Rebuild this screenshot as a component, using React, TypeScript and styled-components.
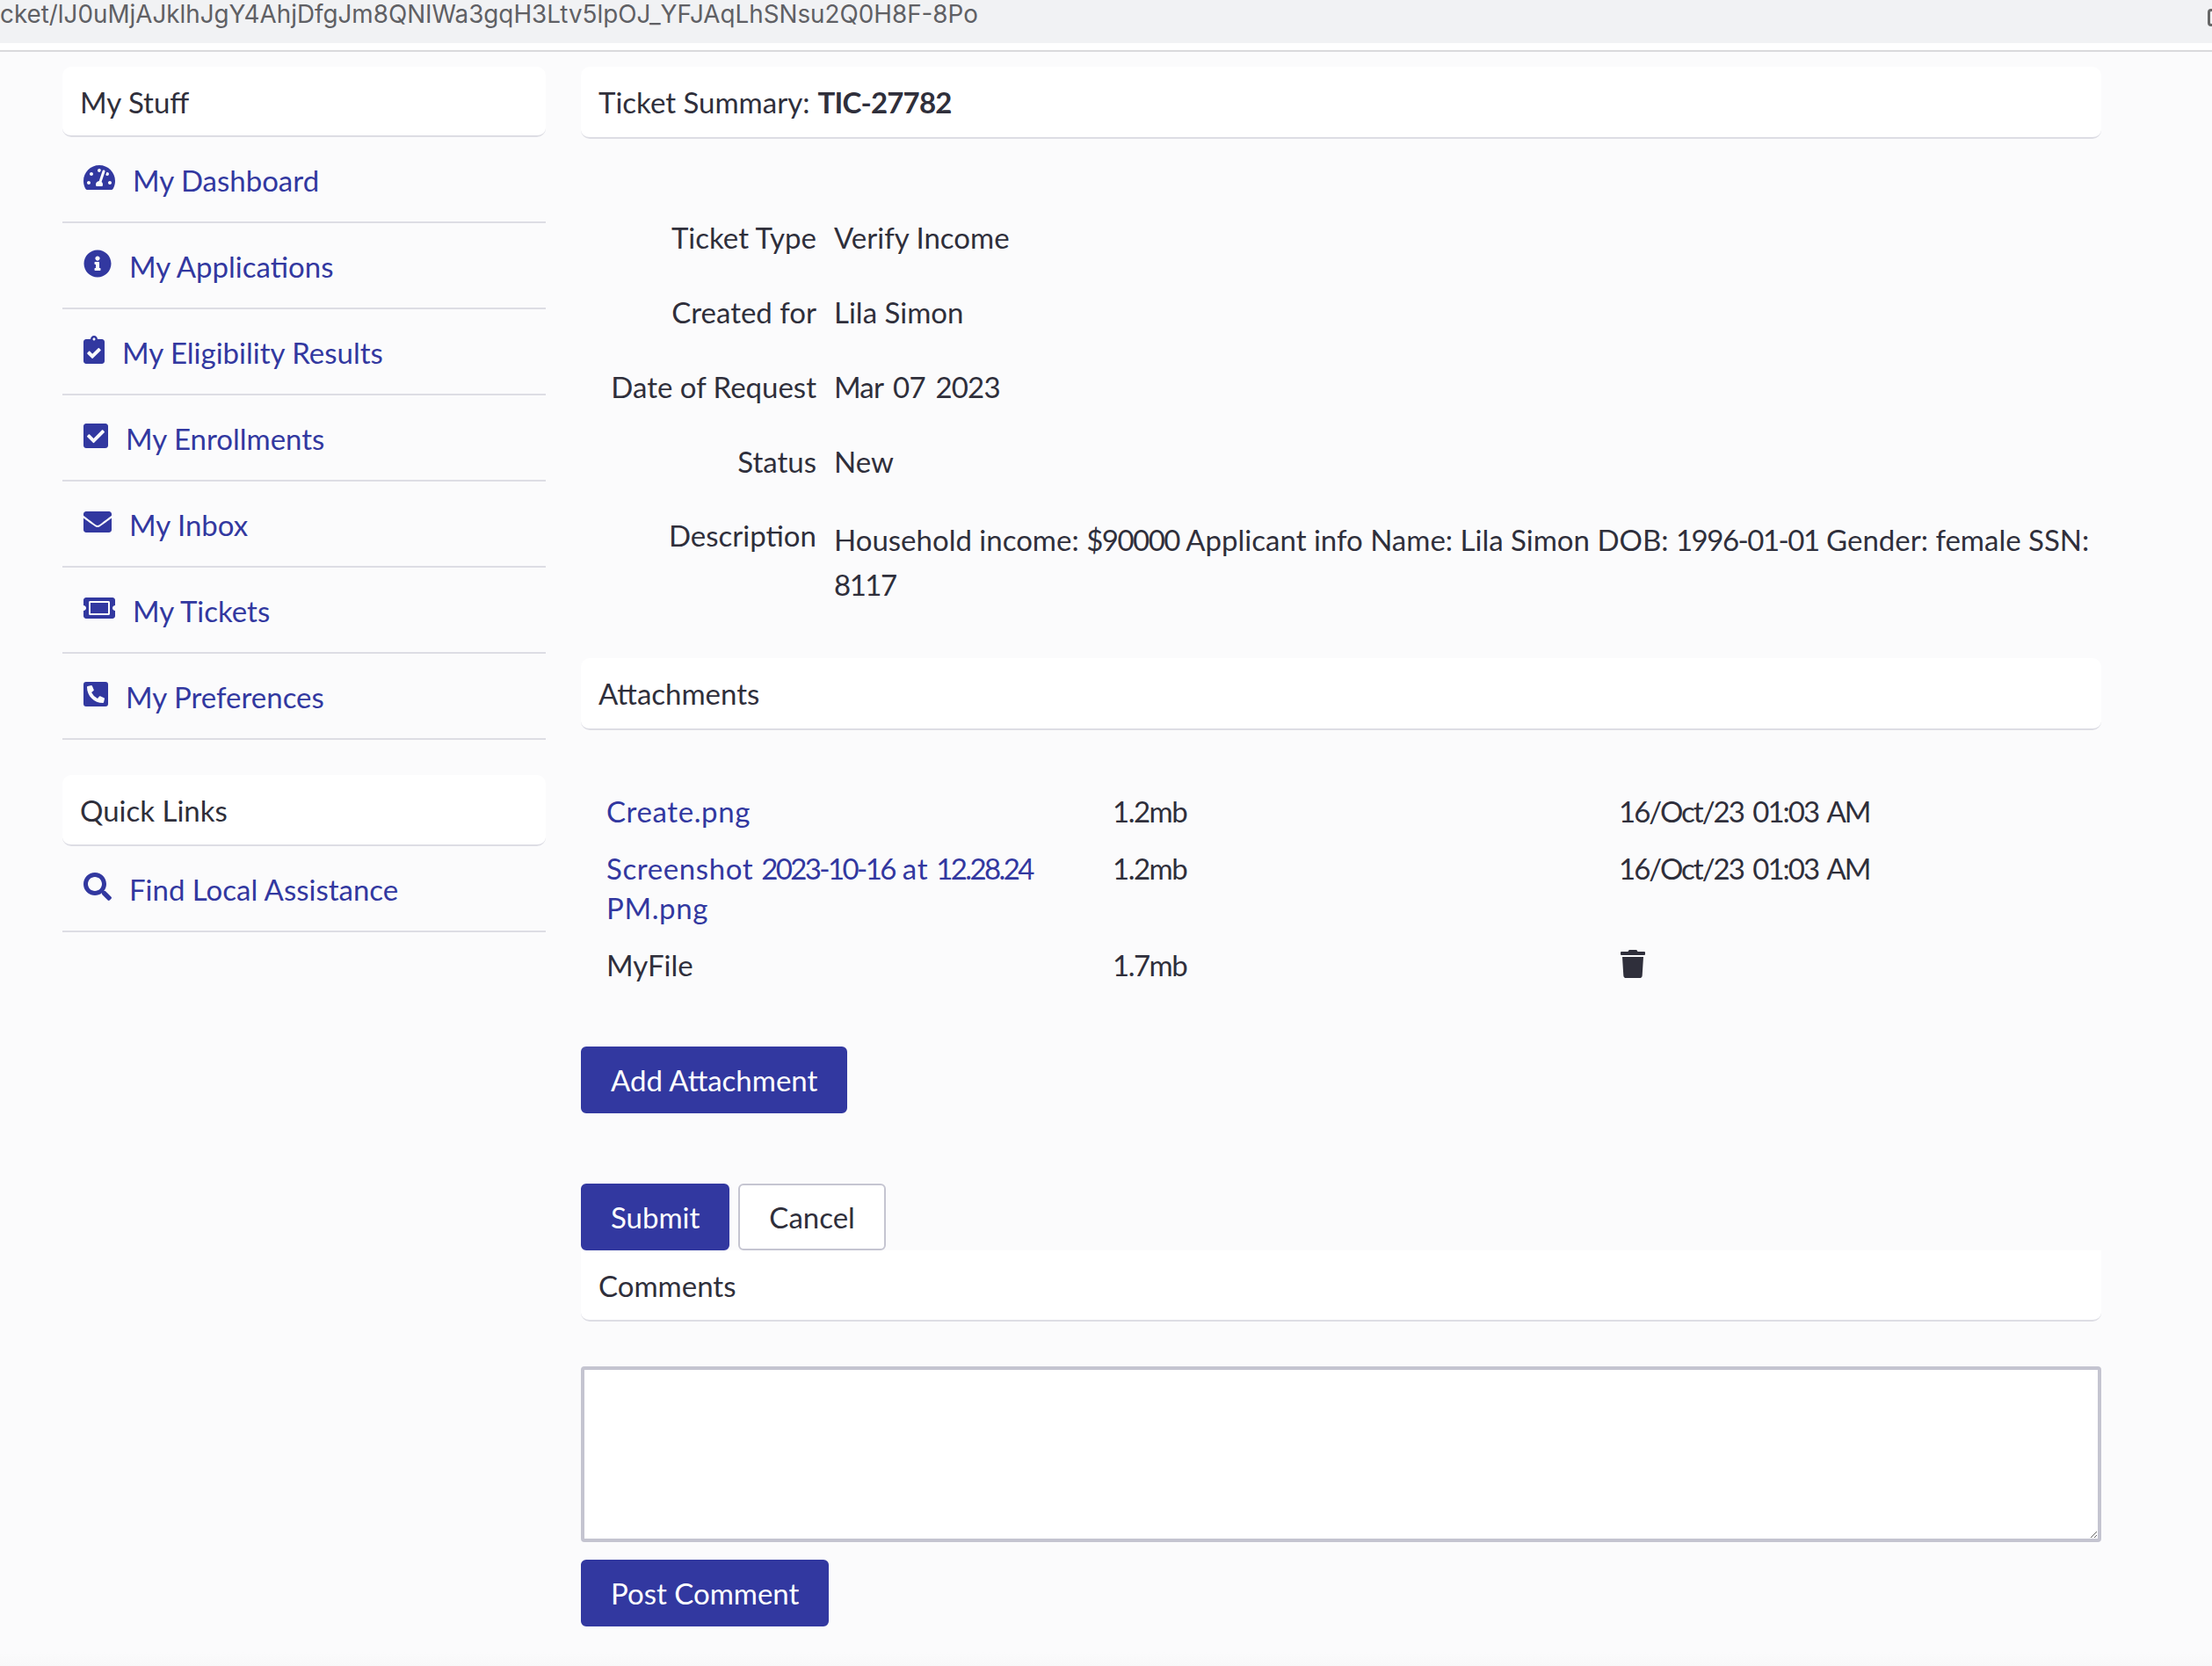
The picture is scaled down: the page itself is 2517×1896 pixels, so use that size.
import React from "react";
import styled, { createGlobalStyle } from "styled-components";
import {
  FaTachometerAlt,
  FaInfoCircle,
  FaClipboardCheck,
  FaCheckSquare,
  FaEnvelope,
  FaTicketAlt,
  FaPhoneSquareAlt,
  FaSearch,
  FaTrash,
} from "react-icons/fa";

const Global = createGlobalStyle`
  html, body { margin: 0; padding: 0; background: #fbfbfc; }
  * { box-sizing: border-box; }
  body { font-family: Lato, "Open Sans", sans-serif; font-size: 33px; color: #2f2f3b; }
`;

const Page = styled.div`
  width: 2517px;
  height: 1896px;
  overflow: hidden;
  background: linear-gradient(#fbfbfc calc(100% - 16px), #f8f8f9);
`;
const UrlBar = styled.div`
  height: 49px;
  background: #f1f2f4;
  display: flex;
  justify-content: space-between;
  overflow: hidden;
`;
const UrlText = styled.div`
  font-family: Inter, sans-serif;
  font-size: 27.8px;
  line-height: 32px;
  color: #5f6064;
  white-space: nowrap;
`;
const UrlIcon = styled.div`
  width: 20px;
  height: 20px;
  margin: 10px -15px 0 0;
  border: 3px solid #666;
  border-radius: 4px;
`;
const Gap = styled.div`
  height: 8px;
  background: #fff;
`;
const Rule = styled.div`
  height: 2px;
  background: #d9d9dc;
`;
const Layout = styled.div`
  display: flex;
  gap: 40px;
  padding: 17px 0 0 71px;
`;
const Sidebar = styled.aside`
  width: 550px;
  flex: none;
`;
const Main = styled.main`
  width: 1730px;
  flex: none;
`;
const CardHead = styled.div<{ $h: number; $pt?: number; $square?: boolean }>`
  height: ${(p) => p.$h}px;
  padding: ${(p) => p.$pt ?? 0}px 20px 0;
  display: flex;
  align-items: center;
  gap: 9px;
  background: #fff;
  border-bottom: 2px solid #dddde4;
  border-radius: ${(p) => (p.$square ? "0 0 10px 10px" : "10px")};
`;
const NavList = styled.nav<{ $mb?: number }>`
  margin-bottom: ${(p) => p.$mb ?? 0}px;
`;
const NavRow = styled.a<{ $iconWidth: number }>`
  height: 98px;
  padding: 2px 0 0 24px;
  display: flex;
  align-items: center;
  gap: 20px;
  color: #3238a0;
  border-bottom: 2px solid #dddde4;
  text-decoration: none;
  svg {
    flex: none;
    width: ${(p) => p.$iconWidth}px;
    height: 32px;
    margin-top: -6px;
  }
`;
const Details = styled.dl`
  margin: 70px 0 0;
  display: grid;
  grid-template-columns: 268px 1fr;
  column-gap: 20px;
`;
const Label = styled.dt<{ $wide?: boolean }>`
  text-align: right;
  line-height: ${(p) => (p.$wide ? "51px" : "85px")};
  padding-top: ${(p) => (p.$wide ? "16px" : "0")};
`;
const Value = styled.dd<{ $wide?: boolean }>`
  margin: 0;
  line-height: ${(p) => (p.$wide ? "51px" : "85px")};
  padding-top: ${(p) => (p.$wide ? "21px" : "0")};
`;
const Num = styled.span<{ $ls?: number }>`
  letter-spacing: ${(p) => p.$ls ?? -1.5}px;
  word-spacing: 4px;
`;
const Section = styled.div<{ $mt: number }>`
  margin-top: ${(p) => p.$mt}px;
`;
const Table = styled.div`
  margin-top: 70px;
  padding-left: 29px;
  display: grid;
  grid-template-columns: 576px 576px 1fr;
  row-gap: 20px;
  line-height: 45px;
`;
const FileLink = styled.a`
  color: #3238a0;
  text-decoration: none;
  padding-right: 40px;
  letter-spacing: 0.6px;
`;
const TrashIcon = styled(FaTrash)`
  width: 28px;
  height: 32px;
  display: block;
  margin: 5px 0 0 2px;
`;
const Button = styled.button<{ $ghost?: boolean; $pad?: number }>`
  height: 76px;
  padding: 0 ${(p) => p.$pad ?? 32}px;
  font: inherit;
  line-height: 1;
  border-radius: 6px;
  border: 2px solid ${(p) => (p.$ghost ? "#c5c5d1" : "#3238a0")};
  background: ${(p) => (p.$ghost ? "#fff" : "#3238a0")};
  color: ${(p) => (p.$ghost ? "#2f2f3b" : "#fff")};
`;
const Actions = styled.div<{ $mt: number }>`
  margin-top: ${(p) => p.$mt}px;
  display: flex;
  gap: 10px;
`;
const Comment = styled.textarea`
  display: block;
  width: 100%;
  height: 200px;
  margin: 51px 0 20px;
  background: #fff;
  border: 4px solid #c4c4d0;
  border-radius: 4px;
  resize: vertical;
  outline: none;
`;
const Strong = styled.strong`
  font-weight: 700;
  letter-spacing: -0.8px;
`;

const navItems = [
  { icon: <FaTachometerAlt />, w: 36, label: "My Dashboard" },
  { icon: <FaInfoCircle />, w: 32, label: "My Applications" },
  { icon: <FaClipboardCheck />, w: 24, label: "My Eligibility Results" },
  { icon: <FaCheckSquare />, w: 28, label: "My Enrollments" },
  { icon: <FaEnvelope />, w: 32, label: "My Inbox" },
  { icon: <FaTicketAlt />, w: 36, label: "My Tickets" },
  { icon: <FaPhoneSquareAlt />, w: 28, label: "My Preferences" },
];

const details: [string, React.ReactNode][] = [
  ["Ticket Type", "Verify Income"],
  ["Created for", "Lila Simon"],
  ["Date of Request", <Num $ls={-0.8}>Mar 07 2023</Num>],
  ["Status", "New"],
];

const Stamp = () => <Num $ls={-2}>16/Oct/23 01:03 AM</Num>;

export default function App() {
  return (
    <Page>
      <Global />
      <UrlBar>
        <UrlText>cket/lJ0uMjAJklhJgY4AhjDfgJm8QNIWa3gqH3Ltv5lpOJ_YFJAqLhSNsu2Q0H8F-8Po</UrlText>
        <UrlIcon />
      </UrlBar>
      <Gap />
      <Rule />
      <Layout>
        <Sidebar>
          <CardHead $h={80} $pt={2}>
            My Stuff
          </CardHead>
          <NavList $mb={40}>
            {navItems.map((n) => (
              <NavRow key={n.label} $iconWidth={n.w}>
                {n.icon}
                <span>{n.label}</span>
              </NavRow>
            ))}
          </NavList>
          <CardHead $h={81}>Quick Links</CardHead>
          <NavList>
            <NavRow $iconWidth={32}>
              <FaSearch />
              <span>Find Local Assistance</span>
            </NavRow>
          </NavList>
        </Sidebar>
        <Main>
          <CardHead $h={82}>
            <span>Ticket Summary:</span>
            <Strong>TIC-27782</Strong>
          </CardHead>
          <Details>
            {details.map(([k, v]) => (
              <React.Fragment key={k}>
                <Label>{k}</Label>
                <Value>{v}</Value>
              </React.Fragment>
            ))}
            <Label $wide>Description</Label>
            <Value $wide>
              Household income: <Num>$90000</Num> Applicant info Name: Lila Simon DOB: <Num>1996-01-01</Num> Gender:
              female SSN: <Num>8117</Num>
            </Value>
          </Details>
          <Section $mt={58}>
            <CardHead $h={82}>Attachments</CardHead>
            <Table>
              <FileLink>Create.png</FileLink>
              <Num>1.2mb</Num>
              <Stamp />
              <FileLink>
                Screenshot <Num $ls={-2.6}>2023-10-16</Num> at <Num $ls={-2.6}>12.28.24</Num> PM.png
              </FileLink>
              <Num>1.2mb</Num>
              <Stamp />
              <span>MyFile</span>
              <Num>1.7mb</Num>
              <TrashIcon />
            </Table>
          </Section>
          <Actions $mt={70}>
            <Button>Add Attachment</Button>
          </Actions>
          <Actions $mt={80}>
            <Button $pad={32}>Submit</Button>
            <Button $ghost $pad={33}>
              Cancel
            </Button>
          </Actions>
          <CardHead $h={81} $square>
            Comments
          </CardHead>
          <Comment />
          <Button>Post Comment</Button>
        </Main>
      </Layout>
    </Page>
  );
}
